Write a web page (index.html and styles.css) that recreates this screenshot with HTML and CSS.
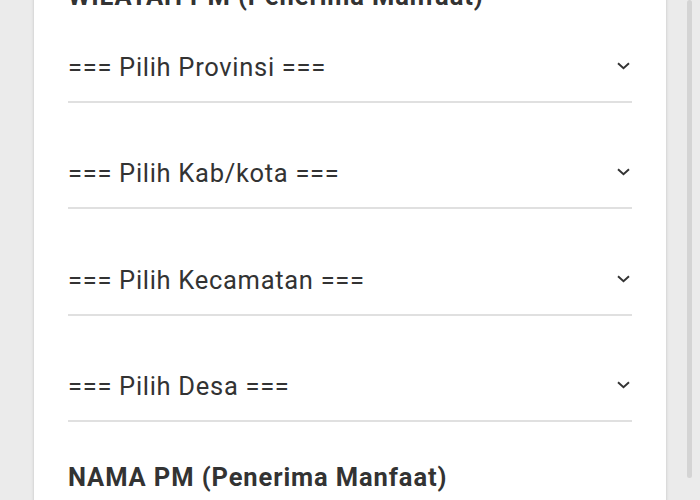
FILE: index.html
```html
<!DOCTYPE html>
<html lang="id">
<head>
<meta charset="utf-8">
<title>Wilayah PM</title>
<link rel="stylesheet" href="styles.css">
</head>
<body>
<div class="card">
  <h2 class="heading">WILAYAH PM (Penerima Manfaat)</h2>
  <div class="field">
    <div class="select"><span class="label">=== Pilih Provinsi ===</span>
      <svg class="chev" width="13" height="8" viewBox="0 0 13 8"><path d="M1 1.2 L6.5 6.3 L12 1.2" fill="none" stroke="#333" stroke-width="1.9"/></svg></div>
  </div>
  <div class="field">
    <div class="select"><span class="label">=== Pilih Kab/kota ===</span>
      <svg class="chev" width="13" height="8" viewBox="0 0 13 8"><path d="M1 1.2 L6.5 6.3 L12 1.2" fill="none" stroke="#333" stroke-width="1.9"/></svg></div>
  </div>
  <div class="field">
    <div class="select"><span class="label">=== Pilih Kecamatan ===</span>
      <svg class="chev" width="13" height="8" viewBox="0 0 13 8"><path d="M1 1.2 L6.5 6.3 L12 1.2" fill="none" stroke="#333" stroke-width="1.9"/></svg></div>
  </div>
  <div class="field">
    <div class="select"><span class="label">=== Pilih Desa ===</span>
      <svg class="chev" width="13" height="8" viewBox="0 0 13 8"><path d="M1 1.2 L6.5 6.3 L12 1.2" fill="none" stroke="#333" stroke-width="1.9"/></svg></div>
  </div>
  <h2 class="heading heading-next">NAMA PM (Penerima Manfaat)</h2>
</div>
<div class="scroll-thumb"></div>
</body>
</html>
```
FILE: styles.css
```css
html, body {
  margin: 0;
  padding: 0;
}
body {
  background: #ebebeb;
  font-family: Roboto, "Noto Sans", sans-serif;
  color: #333;
  overflow: hidden;
  height: 500px;
}
.card {
  background: #fff;
  margin: -45px 34px 0;
  padding: 27.3px 34px 40px;
  box-shadow: 0 0 3px rgba(0,0,0,0.18);
}
.heading {
  margin: 0;
  font-size: 25.5px;
  line-height: 28px;
  font-weight: 700;
  letter-spacing: 0.9px;
  color: #333;
}
.field {
  margin-top: 34.3px;
}
.field + .field {
  margin-top: 48.5px;
}
.select {
  display: flex;
  align-items: center;
  justify-content: space-between;
  padding: 8px 2px 20px 0;
  border-bottom: 2px solid #e0e0e0;
}
.label {
  font-size: 25.5px;
  line-height: 28px;
  letter-spacing: 0.7px;
  color: #333;
}
.chev {
  display: block;
  margin-top: -2px;
}
.heading-next {
  margin-top: 40.5px;
}
.scroll-thumb {
  position: fixed;
  top: 0;
  right: 8px;
  width: 5px;
  height: 478px;
  background: #d4d4d4;
  border-radius: 3px;
}
```
